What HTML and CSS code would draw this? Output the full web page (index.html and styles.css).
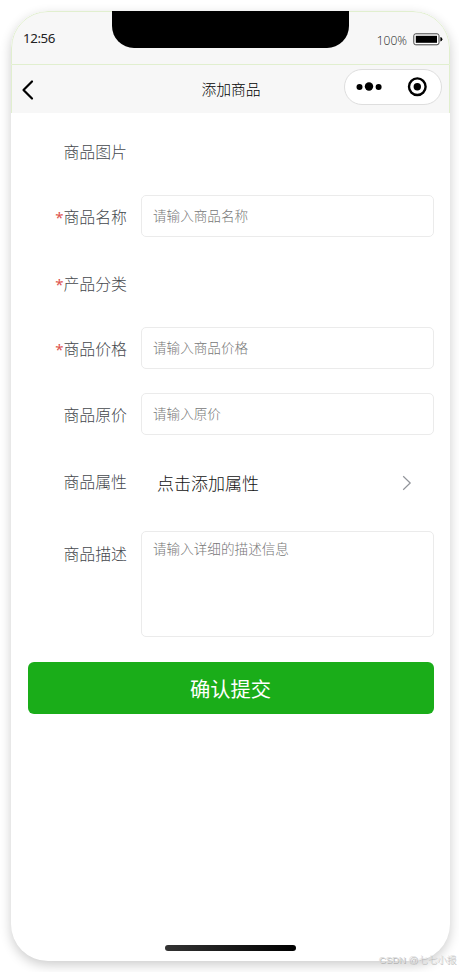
FILE: index.html
```html
<!DOCTYPE html>
<html lang="zh-CN">
<head>
<meta charset="utf-8">
<title>添加商品</title>
<link rel="stylesheet" href="styles.css">
</head>
<body>
<div class="phone">
  <header class="status">
    <span class="time">12:56</span>
    <div class="notch"></div>
    <div class="power">
      <span>100%</span>
      <svg width="30" height="13" viewBox="0 0 30 13"><rect x=".8" y=".8" width="25.2" height="11" rx="2" fill="#fff" stroke="#444" stroke-width="1"/><rect x="2.8" y="2.8" width="21.2" height="7" fill="#000"/><path d="M27.4 4v4.6q2-.4 2-2.3t-2-2.3z" fill="#000"/></svg>
    </div>
  </header>
  <nav class="nav">
    <svg class="back" width="14" height="22" viewBox="0 0 14 22"><path d="M11 2.500 2.500 11l8.500 8.500" fill="none" stroke="#000" stroke-width="2.200" stroke-linecap="round" stroke-linejoin="round"/></svg>
    <h1>添加商品</h1>
    <div class="capsule">
      <svg width="98" height="36" viewBox="0 0 98 36"><circle cx="15.500" cy="18" r="3"/><circle cx="25" cy="17.500" r="4.200"/><circle cx="34.600" cy="18" r="3"/><circle cx="73.300" cy="17.700" r="8.300" fill="none" stroke="#000" stroke-width="2.400"/><circle cx="73.300" cy="17.700" r="3.700"/></svg>
    </div>
  </nav>
  <form class="form">
    <div class="row nudge"><label>商品图片</label></div>
    <div class="row"><label><i>*</i>商品名称</label><div class="field">请输入商品名称</div></div>
    <div class="row nudge"><label><i>*</i>产品分类</label></div>
    <div class="row"><label><i>*</i>商品价格</label><div class="field">请输入商品价格</div></div>
    <div class="row"><label>商品原价</label><div class="field">请输入原价</div></div>
    <div class="row nudge"><label>商品属性</label>
      <div class="picker"><span>点击添加属性</span><svg width="10" height="16" viewBox="0 0 10 16"><path d="M1.200 1.200 8.200 8l-7 6.800" fill="none" stroke="#909399" stroke-width="1.200"/></svg></div>
    </div>
    <div class="row tall"><label>商品描述</label><div class="field area">请输入详细的描述信息</div></div>
    <button type="button">确认提交</button>
  </form>
  <div class="home"></div>
</div>
<div class="watermark">CSDN @七七小报</div>
</body>
</html>
```
FILE: styles.css
```css
* { box-sizing: border-box; }
body {
  margin: 0;
  padding: 11px 9px 11px 11px;
  height: 972px;
  overflow: hidden;
  background: #fff;
  font-family: "Noto Sans", "Noto Sans CJK SC", sans-serif;
}
.phone {
  display: flex;
  flex-direction: column;
  height: 950px;
  overflow: hidden;
  border-radius: 37px;
  background: #fff;
  box-shadow: 0 4px 12px rgba(0, 0, 0, .2);
}
.status {
  display: flex;
  justify-content: space-between;
  height: 54px;
  padding: 0 7px 0 11px;
  background: #f7f7f7;
  border: 1px solid #e1efcf;
  border-radius: 37px 37px 0 0;
  color: #222;
}
.time {
  width: 89px;
  font: 400 13.3px/52px "Noto Sans", "Open Sans", sans-serif;
  letter-spacing: -.4px;
}
.notch {
  width: 237px;
  height: 37px;
  margin-top: -1px;
  border-radius: 0 0 22px 22px;
  background: #000;
}
.power {
  display: flex;
  align-items: center;
  justify-content: flex-end;
  gap: 6px;
  width: 93px;
  padding: 3px 0 0;
  font: 300 12px "Open Sans", sans-serif;
}
.power span { padding-top: 1px; }
.power svg { margin-right: -1px; }
.nav {
  display: grid;
  grid-template-columns: 98px 1fr 98px;
  align-items: center;
  height: 48px;
  padding: 0 7px 0 9px;
  background: #f7f7f7;
  border: solid #e1efcf;
  border-width: 0 1px;
}
.back { margin-top: 2px; }
.nav h1 {
  margin: 0 1px 2px 0;
  text-align: center;
  font: 300 14.8px "Noto Sans CJK SC", sans-serif;
  color: #000;
}
.capsule {
  width: 98px;
  height: 36px;
  margin-bottom: 5px;
  border: 1px solid #dedede;
  border-radius: 18px;
  background: #fff;
}
.capsule svg { display: block; margin: -1px; }
.form {
  flex: 1;
  padding: 4px 17px 0;
  font-family: "Noto Sans CJK SC", sans-serif;
  font-weight: 300;
}
.row {
  display: grid;
  grid-template-columns: 99px 293px;
  column-gap: 14px;
  align-items: center;
  height: 66px;
}
.row label {
  padding-top: 1px;
  text-align: right;
  font-size: 15.9px;
  line-height: 22px;
  color: #45484d;
}
.nudge { padding-top: 2px; }
.row i {
  font: 400 15px/1 "Noto Sans", sans-serif;
  color: #dd524d;
}
.field {
  height: 42px;
  padding: 0 11px;
  border: 1px solid #ebebeb;
  border-radius: 5px;
  font-size: 13.6px;
  line-height: 39px;
  color: #777;
}
.picker {
  display: flex;
  justify-content: space-between;
  align-items: center;
  padding: 3px 22px 0 16px;
  font-size: 17px;
  line-height: 24px;
  color: #111;
}
.tall {
  height: 106px;
  margin-top: 18px;
  align-items: start;
}
.tall label { padding-top: 12px; }
.area { height: 106px; padding-top: 5px; line-height: 22px; }
.form button {
  display: block;
  width: 406px;
  height: 52px;
  margin-top: 25px;
  padding: 0 1px 0 0;
  border: 0;
  border-radius: 6px;
  background: #1aad19;
  color: #fff;
  font: 400 20.3px/52px "Noto Sans CJK SC", sans-serif;
}
.home {
  width: 131px;
  height: 6px;
  margin: 0 auto 10px;
  border-radius: 3px;
  background: linear-gradient(90deg, #333, #000);
}
.watermark {
  position: absolute;
  right: 3px;
  bottom: 5px;
  font: 300 9.5px/15px "Liberation Sans", "Noto Sans CJK SC", sans-serif;
  color: #ddd;
  text-shadow: 1px 1px 0 #b5b5b5;
}
```
